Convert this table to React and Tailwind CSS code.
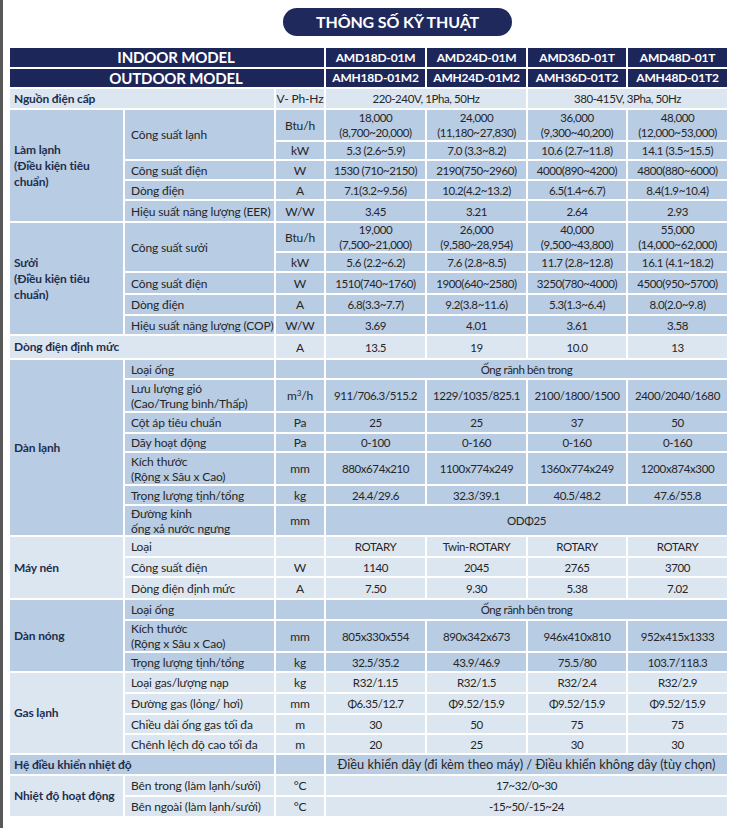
const L = 'bg-[#dce6f1]'
const D = 'bg-[#b8cce4]'

function Cell({ bg, className = '', children }) {
  return (
    <div className={`${bg} flex items-center justify-center text-center whitespace-nowrap leading-[15px] text-[11.5px] tracking-[-0.4px] ${className}`}>
      {children}
    </div>
  )
}

function Unit({ bg, children }) {
  return (
    <div className={`${bg} flex items-center justify-center text-center whitespace-nowrap leading-[15px]`}>
      {children}
    </div>
  )
}

function Group({ bg, className = '', children }) {
  return (
    <div className={`${bg} flex items-center pl-1 font-bold text-[#1f2f4e] leading-[16px] ${className}`}>
      <span>{children}</span>
    </div>
  )
}

function Item({ bg, className = '', children }) {
  return (
    <div className={`${bg} flex items-center pl-1.5 whitespace-nowrap leading-[15px] ${className}`}>
      <span>{children}</span>
    </div>
  )
}

// item + unit + four values
function Row({ bg, label, unit, values }) {
  return (
    <>
      {label !== null && <Item bg={bg}>{label}</Item>}
      <Unit bg={bg}>{unit}</Unit>
      {values.map((v, i) => (
        <Cell key={i} bg={bg}>{v}</Cell>
      ))}
    </>
  )
}

function Two({ a, b }) {
  return (
    <span>
      {a}
      <br />
      {b}
    </span>
  )
}

const headCell = 'bg-[#1d2658] text-white font-bold text-[12px] tracking-[-0.2px] flex items-center justify-center'
const headTitle = 'col-span-3 bg-[#1d2658] text-white font-bold text-[15px] pl-[18px] flex items-center justify-center'

export default function App() {
  return (
    <div className="min-h-[828px] bg-white border-l-[3px] border-[#585858] pl-[7px] pt-2 font-[Lato,'Open_Sans',sans-serif] text-[12px] tracking-[-0.15px] text-[#262626]">
      <div className="ml-[273px] w-[229px] h-[28px] rounded-full bg-[#1f295c] flex items-center justify-center text-white font-bold text-[16px]">
        THÔNG SỐ KỸ THUẬT
      </div>

      <div className="mt-3 w-[717px] grid gap-[2px] bg-white grid-cols-[113px_149px_48px_99px_99px_98px_99px] grid-rows-[19px_18px_19px_30px_17px_18px_18px_20px_28px_18px_20px_19px_18px_22px_18px_31px_19px_17px_31px_18px_29px_19px_18px_20px_19px_30px_18px_19px_19px_18px_18px_19px_19px_19px]">
        {/* header */}
        <div className={headTitle}>INDOOR MODEL</div>
        {['AMD18D-01M', 'AMD24D-01M', 'AMD36D-01T', 'AMD48D-01T'].map((m) => (
          <div key={m} className={headCell}>
            {m}
          </div>
        ))}
        <div className={headTitle}>OUTDOOR MODEL</div>
        {['AMH18D-01M2', 'AMH24D-01M2', 'AMH36D-01T2', 'AMH48D-01T2'].map((m) => (
          <div key={m} className={headCell}>
            {m}
          </div>
        ))}

        {/* nguồn điện */}
        <Group bg={L} className="col-span-2">Nguồn điện cấp</Group>
        <Unit bg={L}>V- Ph-Hz</Unit>
        <Cell bg={L} className="col-span-2">220-240V, 1Pha, 50Hz</Cell>
        <Cell bg={L} className="col-span-2">380-415V, 3Pha, 50Hz</Cell>

        {/* làm lạnh */}
        <Group bg={D} className="row-span-5">
          Làm lạnh
          <br />
          (Điều kiện tiêu
          <br />
          chuẩn)
        </Group>
        <Item bg={D} className="row-span-2">Công suất lạnh</Item>
        <Row
          bg={D}
          label={null}
          unit="Btu/h"
          values={[
            <Two a="18,000" b="(8,700~20,000)" />,
            <Two a="24,000" b="(11,180~27,830)" />,
            <Two a="36,000" b="(9,300~40,200)" />,
            <Two a="48,000" b="(12,000~53,000)" />,
          ]}
        />
        <Row bg={D} label={null} unit="kW" values={['5.3 (2.6~5.9)', '7.0 (3.3~8.2)', '10.6 (2.7~11.8)', '14.1 (3.5~15.5)']} />
        <Row bg={D} label="Công suất điện" unit="W" values={['1530 (710~2150)', '2190(750~2960)', '4000(890~4200)', '4800(880~6000)']} />
        <Row bg={D} label="Dòng điện" unit="A" values={['7.1(3.2~9.56)', '10.2(4.2~13.2)', '6.5(1.4~6.7)', '8.4(1.9~10.4)']} />
        <Row bg={D} label="Hiệu suất năng lượng (EER)" unit="W/W" values={['3.45', '3.21', '2.64', '2.93']} />

        {/* sưởi */}
        <Group bg={D} className="row-span-5">
          Sưởi
          <br />
          (Điều kiện tiêu
          <br />
          chuẩn)
        </Group>
        <Item bg={D} className="row-span-2">Công suất sưởi</Item>
        <Row
          bg={D}
          label={null}
          unit="Btu/h"
          values={[
            <Two a="19,000" b="(7,500~21,000)" />,
            <Two a="26,000" b="(9,580~28,954)" />,
            <Two a="40,000" b="(9,500~43,800)" />,
            <Two a="55,000" b="(14,000~62,000)" />,
          ]}
        />
        <Row bg={D} label={null} unit="kW" values={['5.6 (2.2~6.2)', '7.6 (2.8~8.5)', '11.7 (2.8~12.8)', '16.1 (4.1~18.2)']} />
        <Row bg={D} label="Công suất điện" unit="W" values={['1510(740~1760)', '1900(640~2580)', '3250(780~4000)', '4500(950~5700)']} />
        <Row bg={D} label="Dòng điện" unit="A" values={['6.8(3.3~7.7)', '9.2(3.8~11.6)', '5.3(1.3~6.4)', '8.0(2.0~9.8)']} />
        <Row bg={D} label="Hiệu suất năng lượng (COP)" unit="W/W" values={['3.69', '4.01', '3.61', '3.58']} />

        {/* dòng điện định mức */}
        <Group bg={L} className="col-span-2">Dòng điện định mức</Group>
        <Row bg={L} label={null} unit="A" values={['13.5', '19', '10.0', '13']} />

        {/* dàn lạnh */}
        <Group bg={D} className="row-span-7">Dàn lạnh</Group>
        <Item bg={D}>Loại ống</Item>
        <Unit bg={D} />
        <Cell bg={D} className="col-span-4">Ống rãnh bên trong</Cell>
        <Row
          bg={D}
          label={<Two a="Lưu lượng gió" b="(Cao/Trung bình/Thấp)" />}
          unit={
            <span>
              m<sup className="text-[8px]">3</sup>/h
            </span>
          }
          values={['911/706.3/515.2', '1229/1035/825.1', '2100/1800/1500', '2400/2040/1680']}
        />
        <Row bg={D} label="Cột áp tiêu chuẩn" unit="Pa" values={['25', '25', '37', '50']} />
        <Row bg={D} label="Dãy hoạt động" unit="Pa" values={['0-100', '0-160', '0-160', '0-160']} />
        <Row
          bg={D}
          label={<Two a="Kích thước" b="(Rộng x Sâu x Cao)" />}
          unit="mm"
          values={['880x674x210', '1100x774x249', '1360x774x249', '1200x874x300']}
        />
        <Row bg={D} label="Trọng lượng tịnh/tổng" unit="kg" values={['24.4/29.6', '32.3/39.1', '40.5/48.2', '47.6/55.8']} />
        <Item bg={D}>
          <Two a="Đường kính" b="ống xả nước ngưng" />
        </Item>
        <Unit bg={D}>mm</Unit>
        <Cell bg={D} className="col-span-4">ODΦ25</Cell>

        {/* máy nén */}
        <Group bg={L} className="row-span-3">Máy nén</Group>
        <Row bg={L} label="Loại" unit="" values={['ROTARY', 'Twin-ROTARY', 'ROTARY', 'ROTARY']} />
        <Row bg={L} label="Công suất điện" unit="W" values={['1140', '2045', '2765', '3700']} />
        <Row bg={L} label="Dòng điện định mức" unit="A" values={['7.50', '9.30', '5.38', '7.02']} />

        {/* dàn nóng */}
        <Group bg={D} className="row-span-3">Dàn nóng</Group>
        <Item bg={D}>Loại ống</Item>
        <Unit bg={D} />
        <Cell bg={D} className="col-span-4">Ống rãnh bên trong</Cell>
        <Row
          bg={D}
          label={<Two a="Kích thước" b="(Rộng x Sâu x Cao)" />}
          unit="mm"
          values={['805x330x554', '890x342x673', '946x410x810', '952x415x1333']}
        />
        <Row bg={D} label="Trọng lượng tịnh/tổng" unit="kg" values={['32.5/35.2', '43.9/46.9', '75.5/80', '103.7/118.3']} />

        {/* gas lạnh */}
        <Group bg={L} className="row-span-4">Gas lạnh</Group>
        <Row bg={L} label="Loại gas/lượng nạp" unit="kg" values={['R32/1.15', 'R32/1.5', 'R32/2.4', 'R32/2.9']} />
        <Row bg={L} label="Đường gas (lỏng/ hơi)" unit="mm" values={['Φ6.35/12.7', 'Φ9.52/15.9', 'Φ9.52/15.9', 'Φ9.52/15.9']} />
        <Row bg={L} label="Chiều dài ống gas tối đa" unit="m" values={['30', '50', '75', '75']} />
        <Row bg={L} label="Chênh lệch độ cao tối đa" unit="m" values={['20', '25', '30', '30']} />

        {/* điều khiển */}
        <Group bg={D} className="col-span-2">Hệ điều khiển nhiệt độ</Group>
        <Unit bg={D} />
        <Cell bg={D} className="col-span-4 text-[12.8px] tracking-[0px]">
          Điều khiển dây (đi kèm theo máy) / Điều khiển không dây (tùy chọn)
        </Cell>

        {/* nhiệt độ hoạt động */}
        <Group bg={L} className="row-span-2">Nhiệt độ hoạt động</Group>
        <Item bg={L}>Bên trong (làm lạnh/sưởi)</Item>
        <Unit bg={L}>°C</Unit>
        <Cell bg={L} className="col-span-4">17~32/0~30</Cell>
        <Item bg={L}>Bên ngoài (làm lạnh/sưởi)</Item>
        <Unit bg={L}>°C</Unit>
        <Cell bg={L} className="col-span-4">-15~50/-15~24</Cell>
      </div>
    </div>
  )
}
